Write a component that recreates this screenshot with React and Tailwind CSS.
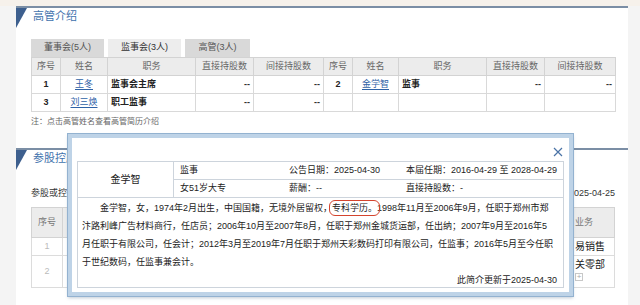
import React from "react";

const topCols = [29, 47, 88, 58, 70, 29, 46, 88, 58, 71];

function Dash() {
  return <span className="font-bold text-[#333]">--</span>;
}

function NameLink({ children }) {
  return <span className="text-[#2f62a6] underline underline-offset-2">{children}</span>;
}

function PanelTitle({ children }) {
  return (
    <div className="relative h-[16px] pl-[17px] flex items-center">
      <div className="absolute left-0 top-0 w-0 h-0 border-t-[20px] border-t-[#3d5f8e] border-r-[11px] border-r-transparent" />
      <span className="text-[11px] text-[#3f72ad] leading-[16px]">{children}</span>
    </div>
  );
}

function SeniorTable() {
  const th = "border border-[#d3d3d3] text-center font-normal text-[#666]";
  const td = "border border-[#d9d9d9] px-[3px]";
  return (
    <table className="table-fixed border-collapse w-[584px] text-[9px]">
      <colgroup>
        {topCols.map((w, i) => (
          <col key={i} style={{ width: w }} />
        ))}
      </colgroup>
      <thead>
        <tr className="h-[18px] bg-[#ececec]">
          <th className={th}>序号</th>
          <th className={th}>姓名</th>
          <th className={th}>职务</th>
          <th className={th}>直接持股数</th>
          <th className={th}>间接持股数</th>
          <th className={th}>序号</th>
          <th className={th}>姓名</th>
          <th className={th}>职务</th>
          <th className={th}>直接持股数</th>
          <th className={th}>间接持股数</th>
        </tr>
      </thead>
      <tbody className="text-[#222]">
        <tr className="h-[18px]">
          <td className={`${td} text-center font-bold`}>1</td>
          <td className={`${td} text-center`}><NameLink>王冬</NameLink></td>
          <td className={`${td} font-bold`}>监事会主席</td>
          <td className={`${td} text-right`}><Dash /></td>
          <td className={`${td} text-right`}><Dash /></td>
          <td className={`${td} text-center font-bold`}>2</td>
          <td className={`${td} text-center`}><NameLink>金学智</NameLink></td>
          <td className={`${td} font-bold`}>监事</td>
          <td className={`${td} text-right`}><Dash /></td>
          <td className={`${td} text-right`}><Dash /></td>
        </tr>
        <tr className="h-[18px]">
          <td className={`${td} text-center font-bold`}>3</td>
          <td className={`${td} text-center`}><NameLink>刘三焕</NameLink></td>
          <td className={`${td} font-bold`}>职工监事</td>
          <td className={`${td} text-right`}><Dash /></td>
          <td className={`${td} text-right`}><Dash /></td>
          <td className={td}></td>
          <td className={td}></td>
          <td className={td}></td>
          <td className={td}></td>
          <td className={td}></td>
        </tr>
      </tbody>
    </table>
  );
}

function HoldingTable() {
  const th = "border border-[#d3d3d3] font-normal text-[#777] text-center";
  const td = "border border-[#dcdcdc]";
  return (
    <table className="table-fixed border-collapse w-[583px] text-[9px]">
      <colgroup>
        <col style={{ width: 31 }} />
        <col style={{ width: 160 }} />
        <col style={{ width: 70 }} />
        <col style={{ width: 70 }} />
        <col style={{ width: 80 }} />
        <col style={{ width: 131 }} />
        <col style={{ width: 41 }} />
      </colgroup>
      <thead>
        <tr className="h-[30px] bg-[#ececec]">
          <th className={th}>序号</th>
          <th className={th}></th>
          <th className={th}></th>
          <th className={th}></th>
          <th className={th}></th>
          <th className={th}></th>
          <th className={`${th} text-left pl-[1px]`}>业务</th>
        </tr>
      </thead>
      <tbody>
        <tr className="h-[18px]">
          <td className={`${td} text-center text-[#bbb]`}>1</td>
          <td className={td}></td>
          <td className={td}></td>
          <td className={td}></td>
          <td className={td}></td>
          <td className={td}></td>
          <td className={`${td} pl-[1px] text-[10px] text-[#222]`}>易销售</td>
        </tr>
        <tr className="h-[32px]">
          <td className={`${td} text-center text-[#bbb]`}>2</td>
          <td className={td}></td>
          <td className={td}></td>
          <td className={td}></td>
          <td className={td}></td>
          <td className={td}></td>
          <td className={`${td} pl-[1px] align-top text-[10px] text-[#222]`}>
            <div className="leading-[16px] mt-[1px]">关零部</div>
            <div className="w-[8px] h-[8px] border border-[#c8c8c8] flex items-center justify-center text-[8px] leading-none text-[#aaa]">+</div>
          </td>
        </tr>
      </tbody>
    </table>
  );
}

function Popup() {
  return (
    <div className="absolute left-[68px] top-[134px] w-[505px] h-[162px] bg-white border-[4px] border-[#bed3e7] shadow-[0_0_0_1px_#93b2d0,0_2px_3px_rgba(80,110,140,0.35)]">
      <div className="h-[23px] flex justify-end items-start pt-[9px] pr-[5px]">
        <svg width="10" height="10" viewBox="0 0 10 10" className="mr-[1px]">
          <path d="M1 1 L9 9 M9 1 L1 9" stroke="#4a73a6" strokeWidth="1.2" fill="none" />
        </svg>
      </div>
      <div className="mx-[5px] h-[127px] border border-[#cdd4dc] flex flex-col text-[9px] text-[#222]">
        <div className="flex h-[36px] border-b border-[#cdd4dc]">
          <div className="w-[96px] border-r border-[#cdd4dc] flex items-center justify-center text-[10px]">金学智</div>
          <div className="flex-1 flex flex-col">
            <div className="h-[18px] border-b border-[#cdd4dc] grid grid-cols-[109px_117px_1fr] items-center pl-[6px]">
              <span>监事</span>
              <span>公告日期：2025-04-30</span>
              <span className="whitespace-nowrap">本届任期：2016-04-29 至 2028-04-29</span>
            </div>
            <div className="h-[17px] grid grid-cols-[109px_117px_1fr] items-center pl-[6px]">
              <span>女51岁大专</span>
              <span>薪酬：--</span>
              <span>直接持股数：-</span>
            </div>
          </div>
        </div>
        <div className="flex-1 pl-[4px] pr-[6px] pt-[1px] leading-[18px] whitespace-nowrap">
          <div className="pl-[18px]">
            金学智，女，1974年2月出生，中国国籍，无境外居留权，
            <span className="rounded-[3px] outline-[1.5px] outline-solid outline-[#d4442e] outline-offset-[2px]">专科学历。</span>
            1998年11月至2006年9月，任职于郑州市郑
          </div>
          <div>汴路利峰广告材料商行，任店员；2006年10月至2007年8月，任职于郑州金城货运部，任出纳；2007年9月至2016年5</div>
          <div>月任职于有限公司，任会计；2012年3月至2019年7月任职于郑州天彩数码打印有限公司，任监事；2016年5月至今任职</div>
          <div>于世纪数码，任监事兼会计。</div>
          <div className="text-right">此简介更新于2025-04-30</div>
        </div>
      </div>
    </div>
  );
}

export default function App() {
  return (
    <div className="relative w-[640px] h-[305px] overflow-hidden bg-[#f4f4f4] font-['Liberation_Sans','Noto_Sans_CJK_SC',sans-serif]">
      <div className="h-[6px] bg-[#f6f1eb]" />
      <div className="ml-[16px] w-[612px] flex flex-col">
        <section className="h-[142px] bg-white border-t-2 border-[#7b8ea5] pl-[15px]">
          <div className="-ml-[15px]">
            <PanelTitle>高管介绍</PanelTitle>
          </div>
          <div className="mt-[15px] flex gap-[4px] text-[9px]">
            <div className="w-[73px] h-[18px] bg-[#d9d9d9] text-[#555] flex items-center justify-center">董事会(5人)</div>
            <div className="w-[73px] h-[18px] bg-[#ededed] text-[#333] flex items-center justify-center">监事会(3人)</div>
            <div className="w-[65px] h-[18px] bg-[#d9d9d9] text-[#555] flex items-center justify-center">高管(3人)</div>
          </div>
          <SeniorTable />
          <div className="mt-[3px] text-[8px] leading-[14px] text-[#666]">注：点击高管姓名查看高管简历介绍</div>
        </section>
        <section className="h-[157px] bg-white border-t-2 border-[#7b8ea5] pl-[15px]">
          <div className="-ml-[15px]">
            <PanelTitle>参股控股公司</PanelTitle>
          </div>
          <div className="mt-[20px] pr-[13px] flex justify-between text-[9px] leading-[14px] text-[#333]">
            <span>参股或控股公司情况</span>
            <span>截止日期：2025-04-25</span>
          </div>
          <div className="mt-[7px]">
            <HoldingTable />
          </div>
        </section>
      </div>
      <Popup />
    </div>
  );
}
